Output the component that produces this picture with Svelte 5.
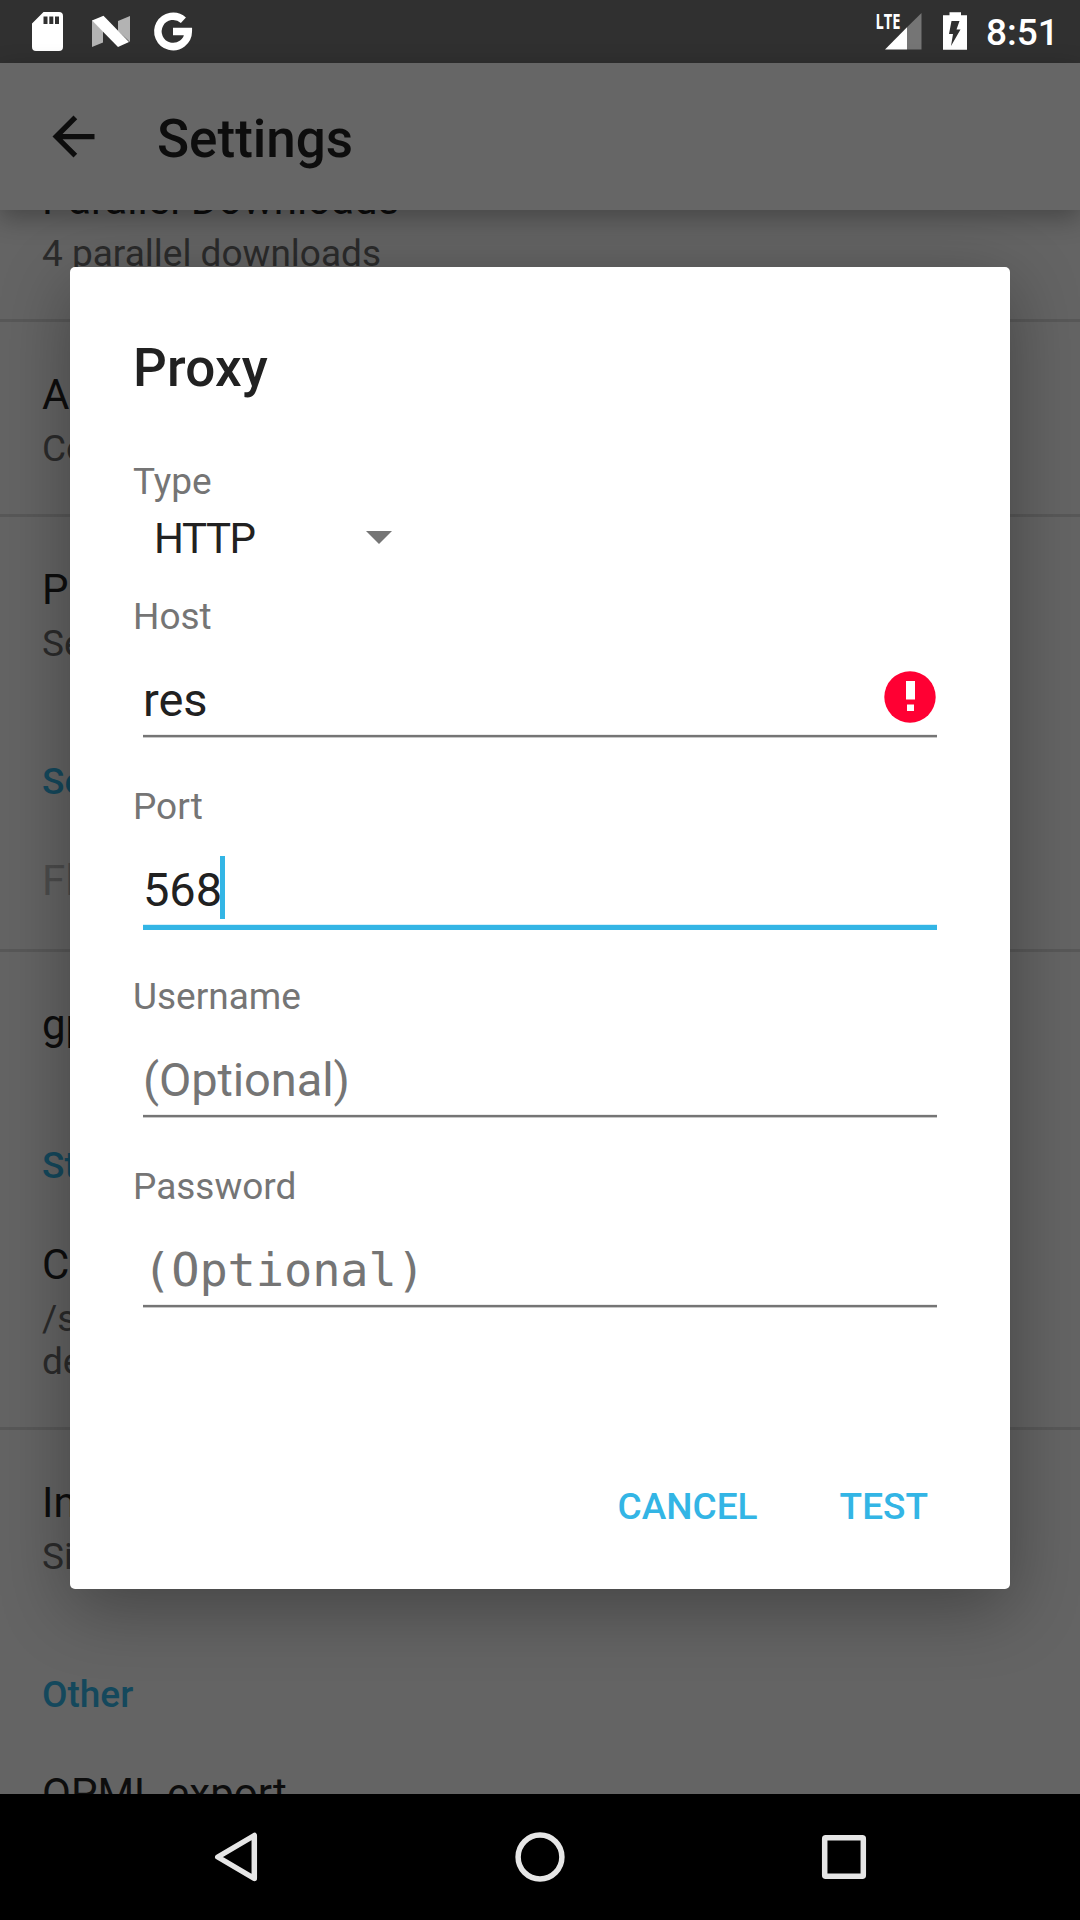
<script>
  const rows = [
    { kind: 'item', title: 'Parallel Downloads', summary: '4 parallel downloads', line: true },
    { kind: 'item', title: 'A', summary: 'Co', line: true },
    { kind: 'item', title: 'P', summary: 'Se' },
    { kind: 'header', title: 'Se' },
    { kind: 'item', title: 'Fl', disabled: true, line: true },
    { kind: 'item', title: 'gp' },
    { kind: 'header', title: 'St' },
    { kind: 'item', title: 'C', summary: '/s\nde', line: true },
    { kind: 'item', title: 'In', summary: 'Si' },
    { kind: 'header', title: 'Other' },
    { kind: 'item', title: 'OPML export' }
  ];

  const fields = [
    { label: 'Host', value: 'res', error: true },
    { label: 'Port', value: '568', focused: true },
    { label: 'Username', hint: '(Optional)' },
    { label: 'Password', hint: '(Optional)', mono: true }
  ];
</script>

<div class="screen">
  <header class="status">
    <svg class="notifications" width="200" height="63" viewBox="0 0 200 63">
      <path fill="#fff" fill-rule="evenodd" d="M43.5 12H59a4 4 0 0 1 4 4V47a4 4 0 0 1-4 4H36a4 4 0 0 1-4-4V23.500ZM43.500 16.500V24H47.500V16.500ZM49.300 16.500V24H53.300V16.500ZM55 16.500V24H59V16.500Z" />
      <path fill="#b3b3b3" d="M92 20 103 31V42.500L92 47ZM118 21 130 16V42L118 31Z" />
      <path fill="#fff" d="M92 20.500 103.500 15.700 129 42 118 47Z" />
      <path fill="none" stroke="#fff" stroke-width="7.500" d="M183.400 20.200A15.200 15.200 0 1 0 188.300 31.500H173" />
    </svg>
    <svg class="indicators" width="100" height="63" viewBox="872 0 100 63">
      <path fill="#757575" d="M907 27.300 921.500 13V49.500H907Z" />
      <path fill="#fff" d="M885 49.500 907 27.300V49.500Z" />
      <text x="875.500" y="29" textLength="25" lengthAdjust="spacingAndGlyphs">LTE</text>
      <path fill="#fff" d="M949.500 12.300H961V15.300H967V49.700H943V15.300H949.500Z" />
      <path fill="#303030" d="M951.500 21H959.500L956.500 29.500H960.500L951 46L953 34H949Z" />
    </svg>
    <span class="clock">8:51</span>
  </header>

  <div class="appbar">
    <svg width="63" height="63" viewBox="0 0 24 24">
      <path fill="#0d0d0d" d="M20 11H7.830l5.590-5.590L12 4l-8 8 8 8 1.410-1.410L7.830 13H20v-2z" />
    </svg>
    <h1>Settings</h1>
  </div>

  <main class="list">
    {#each rows as row}
      {#if row.kind === 'header'}
        <div class="group">{row.title}</div>
      {:else}
        <div class="item" class:line={row.line} class:disabled={row.disabled}>
          <div class="title">{row.title}</div>
          {#if row.summary}<div class="summary">{row.summary}</div>{/if}
        </div>
      {/if}
    {/each}
  </main>

  <nav>
    <svg width="1080" height="126" viewBox="0 0 1080 126" fill="none" stroke="#e6e6e6" stroke-width="5.500" stroke-linejoin="round">
      <path d="M254.300 41.500V84.500L217.800 63Z" />
      <circle cx="540" cy="63" r="21.900" />
      <rect x="824.700" y="43.700" width="38.600" height="38.600" rx="1" />
    </svg>
  </nav>

  <section class="dialog">
    <h2>Proxy</h2>
    <div class="label">Type</div>
    <div class="spinner">
      <span>HTTP</span>
      <svg width="26" height="13" viewBox="0 0 26 13"><path fill="#757575" d="M0 0H26L13 13Z" /></svg>
    </div>
    {#each fields as field}
      <div class="label">{field.label}</div>
      <div class="input" class:focused={field.focused}>
        <div class="text" class:hint={field.hint} class:mono={field.mono}>
          <span>{field.value ?? field.hint}</span>
          {#if field.focused}<i class="caret"></i>{/if}
          {#if field.error}
            <svg class="error" width="52" height="52" viewBox="0 0 52 52">
              <circle cx="26" cy="26" r="25.700" fill="#f03" />
              <path fill="#fff" d="M22 10H31V28.500H22ZM23 33.500H30V40H23Z" />
            </svg>
          {/if}
        </div>
        <div class="underline"></div>
      </div>
    {/each}
    <div class="actions">
      <span>CANCEL</span>
      <span>TEST</span>
    </div>
  </section>
</div>

<style>
  :global(body) {
    margin: 0;
    background: #646464;
  }
  .screen {
    position: relative;
    display: flex;
    flex-direction: column;
    width: 1080px;
    height: 1920px;
    overflow: hidden;
    background: #646464;
    font-family: Roboto, sans-serif;
    color: #0d0d0d;
  }
  svg {
    display: block;
    flex: none;
  }
  .status {
    display: flex;
    flex: none;
    height: 63px;
    background: #303030;
  }
  .indicators {
    margin-left: 672px;
  }
  .indicators text {
    font: 700 21px 'Open Sans', sans-serif;
    fill: #fff;
  }
  .clock {
    margin-left: 14px;
    color: #fff;
    font-size: 37px;
    font-weight: 500;
    line-height: 66px;
  }
  .appbar {
    position: relative;
    z-index: 1;
    display: flex;
    align-items: center;
    flex: none;
    height: 147px;
    padding-left: 42px;
    background: #666;
    box-shadow: 0 8px 24px rgba(0, 0, 0, 0.3);
  }
  h1,
  h2 {
    margin: 0;
    font-size: 53px;
    font-weight: 500;
    line-height: 62px;
  }
  h1 {
    margin: 5px 0 0 52px;
  }
  .list {
    flex: 1;
    min-height: 0;
    overflow: hidden;
  }
  .item {
    padding: 48px 42px 44px;
    white-space: pre-line;
  }
  .item:first-child {
    margin-top: -83px;
  }
  .line {
    border-bottom: 3px solid #585858;
  }
  .title {
    font-size: 42px;
    line-height: 49px;
  }
  .disabled {
    color: #4c4c4c;
  }
  .summary {
    margin-top: 8px;
    font-size: 37px;
    line-height: 43px;
    color: #2b2b2b;
  }
  .group {
    padding: 51px 42px 5px;
    font-size: 37px;
    font-weight: 500;
    line-height: 43px;
    color: #14485c;
  }
  nav {
    position: relative;
    flex: none;
    height: 126px;
    background: #000;
  }
  .dialog {
    position: absolute;
    left: 70px;
    top: 267px;
    box-sizing: border-box;
    width: 940px;
    height: 1322px;
    padding: 70px 73px 0 63px;
    border-radius: 5px;
    background: #fff;
    color: #212121;
    box-shadow: 0 18px 70px rgba(0, 0, 0, 0.33);
  }
  h2 {
    margin-bottom: 61px;
    letter-spacing: 0.2px;
  }
  .label {
    font-size: 37px;
    line-height: 43px;
    color: #757575;
  }
  .spinner {
    display: flex;
    justify-content: space-between;
    box-sizing: border-box;
    width: 259px;
    height: 92px;
    padding: 11px 0 0 21px;
    font-size: 42px;
    line-height: 49px;
  }
  .spinner span {
    letter-spacing: -1.4px;
  }
  .spinner svg {
    margin-top: 17px;
  }
  .input {
    height: 147px;
    padding-left: 10px;
  }
  .text {
    display: flex;
    box-sizing: border-box;
    height: 97px;
    padding-top: 34px;
    font-size: 47px;
    line-height: 56px;
  }
  .text span {
    letter-spacing: -0.1px;
  }
  .hint {
    color: #757575;
  }
  .mono {
    font-family: 'DejaVu Sans Mono', monospace;
  }
  .caret {
    width: 5px;
    height: 63px;
    margin: -6px 0 0 -2px;
    background: #33b5e5;
  }
  .error {
    margin: -1px 1px 0 auto;
  }
  .underline {
    height: 2px;
    background: #757575;
    box-shadow: 0 1px 0 #c8c8c8, 0 -1px 0 #ececec;
  }
  .focused .underline {
    height: 5px;
    background: #33b5e5;
    box-shadow: 0 -1px 0 #d6f0fa;
  }
  .actions {
    display: flex;
    justify-content: flex-end;
    gap: 82px;
    margin-top: 130px;
    padding-right: 9px;
    font-size: 37px;
    font-weight: 500;
    line-height: 43px;
    color: #33b5e5;
  }
</style>
